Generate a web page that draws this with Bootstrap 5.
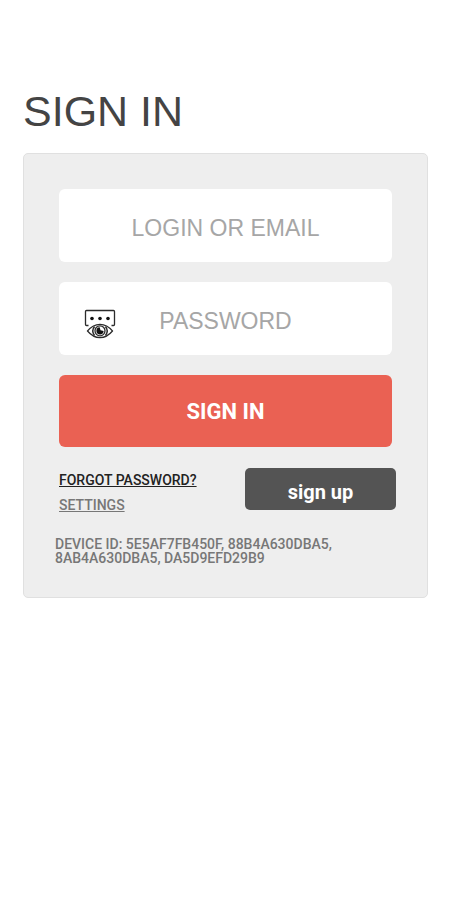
<!DOCTYPE html>
<html lang="en">
<head>
<meta charset="utf-8">
<meta name="viewport" content="width=device-width, initial-scale=1">
<title>Sign in</title>
<link href="https://cdn.jsdelivr.net/npm/bootstrap@5.3.0/dist/css/bootstrap.min.css" rel="stylesheet">
<style>
body { font-family: Roboto, sans-serif; background: #fff; }
.page { padding: 88px 22px 40px 23px; }
.page-title { font: 400 43px/46px "Liberation Sans", sans-serif; color: #444; margin-bottom: 19px; }
.panel { background: #eee; border: 1px solid #e0e0e0; border-radius: 5px; padding: 35px 31px 32px; }
.fields { gap: 20px; padding: 0 4px; }
.field, .field:focus { height: 73px; border: 0; border-radius: 6px; background: #fff; padding: 6px 12px 0; font: 400 23px/32px "Liberation Sans", sans-serif; text-align: center; color: #444; }
.field::placeholder { color: #a6a6a6; opacity: 1; }
.reveal { top: 27px; left: 25px; line-height: 0; }
.btn-signin, .btn-signin:hover { height: 72px; background: #ea6153; color: #fff; border: 0; border-radius: 6px; font-size: 22px; font-weight: 700; }
.actions { margin-top: 21px; }
.links { padding: 3px 0 0 4px; gap: 7px; font-size: 14px; line-height: 18px; font-weight: 500; }
.forgot { color: #222; }
.settings { color: #777; }
.btn-signup, .btn-signup:hover { width: 151px; height: 42px; background: #545454; color: #fff; border: 0; border-radius: 5px; padding: 6px 0 0; font-size: 20px; line-height: 24px; font-weight: 700; }
.device { margin-top: 23px; font-size: 14px; line-height: 14px; font-weight: 500; color: #777; }
</style>
</head>
<body>
<main class="page">
  <h1 class="page-title">SIGN IN</h1>
  <form class="panel">
    <div class="fields d-flex flex-column">
      <input class="field form-control shadow-none" type="text" placeholder="LOGIN OR EMAIL" aria-label="Login or email">
      <div class="position-relative">
        <input class="field form-control shadow-none" type="password" placeholder="PASSWORD" aria-label="Password">
        <button class="reveal btn border-0 p-0 position-absolute" type="button" aria-label="Show password">
          <svg width="32" height="30" viewBox="0 0 32 30" fill="none" stroke="#2b2b2b">
            <path d="M4.500 16.500H2.500Q1.500 16.500 1.500 15.500V2.500Q1.500 1.500 2.500 1.500H29.500Q30.500 1.500 30.500 2.500V15.500Q30.500 16.500 29.500 16.500H27.500" stroke-width="1.300"/>
            <g fill="#111" stroke="none"><circle cx="8" cy="9.500" r="1.800"/><circle cx="16" cy="9.500" r="1.800"/><circle cx="24" cy="9.500" r="1.800"/></g>
            <path d="M3.500 22Q9 15.300 16 15.300T28.500 22Q23 28.600 16 28.600T3.500 22Z" fill="#fff" stroke-width="1.200"/>
            <path d="M10.500 17.500Q7 22 10.500 26.500M21.500 17.500Q25 22 21.500 26.500" stroke-width="1.500"/>
            <circle cx="16" cy="21.800" r="5" stroke-width="1.300"/>
            <path d="M15.700 18.300A3.600 3.600 0 1 0 19.600 22L16.500 21.300Z" fill="#111" stroke="none"/>
          </svg>
        </button>
      </div>
      <button class="btn btn-signin w-100" type="submit">SIGN IN</button>
    </div>
    <div class="actions d-flex justify-content-between align-items-start">
      <div class="links d-flex flex-column align-items-start">
        <a class="forgot" href="#">FORGOT PASSWORD?</a>
        <a class="settings" href="#">SETTINGS</a>
      </div>
      <button class="btn btn-signup" type="button">sign up</button>
    </div>
    <p class="device mb-0">DEVICE ID: 5E5AF7FB450F, 88B4A630DBA5, 8AB4A630DBA5, DA5D9EFD29B9</p>
  </form>
</main>
<script src="https://cdn.jsdelivr.net/npm/bootstrap@5.3.0/dist/js/bootstrap.bundle.min.js"></script>
</body>
</html>
